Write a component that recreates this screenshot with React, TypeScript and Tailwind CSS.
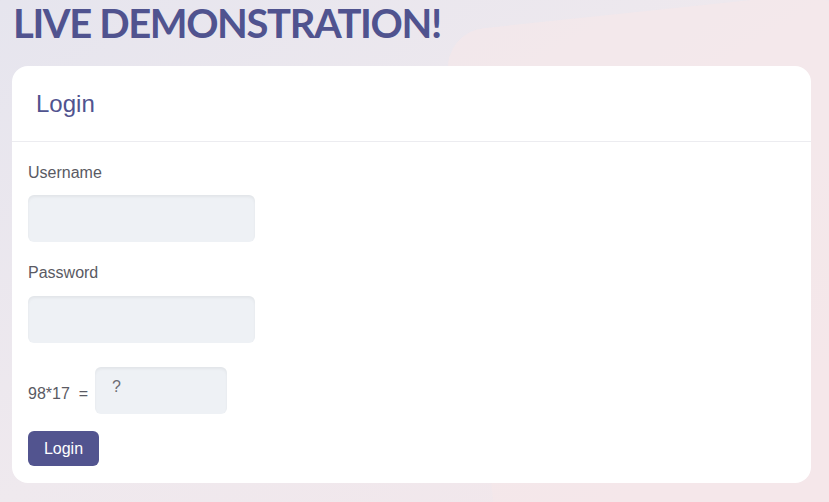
import React from "react";

export default function App() {
  return (
    <div className="w-[829px] h-[502px] overflow-hidden bg-gradient-to-br from-[#e6e5ee] via-[#efe9ee] to-[#f3e6ea] font-['Liberation_Sans',Arial,sans-serif]">
      <div className="relative h-full">
        {/* faint decorative shape */}
        <div className="absolute left-[470px] top-[10px] w-[400px] h-[520px] rounded-[40px] bg-[#f7e8ea]/60 -rotate-6" />
        <div className="relative px-3">
          <h1 className="h-[66px] pt-[1px] pl-[1px] font-['Lato',sans-serif] font-bold text-[40px] leading-[44px] text-[#50538f] tracking-[-1.4px]">
            LIVE DEMONSTRATION!
          </h1>
          <div className="w-[799px] h-[417px] bg-white rounded-2xl">
            <div className="h-[76px] border-b border-[#ececf0] pl-[24px] pt-[23px]">
              <h2 className="text-[24px] leading-[30px] text-[#50538f]">Login</h2>
            </div>
            <form className="px-4 pt-[22px] flex flex-col">
              <label className="text-[16px] leading-[18px] text-[#5a5a63]">Username</label>
              <input className="mt-[13px] w-[227px] h-[47px] rounded-md bg-[#eef1f5] shadow-[inset_0_2px_3px_rgba(0,0,0,0.05)] outline-none" />
              <label className="mt-[22px] text-[16px] leading-[18px] text-[#5a5a63]">Password</label>
              <input type="password" className="mt-[14px] w-[227px] h-[47px] rounded-md bg-[#eef1f5] shadow-[inset_0_2px_3px_rgba(0,0,0,0.05)] outline-none" />
              <div className="mt-[24px] flex items-center">
                <span className="text-[16px] text-[#5a5a63] pt-[7px]">98*17&nbsp; =</span>
                <input placeholder="?" className="ml-[7px] w-[132px] h-[47px] rounded-md bg-[#eef1f5] shadow-[inset_0_2px_3px_rgba(0,0,0,0.05)] outline-none px-[17px] pb-[8px] text-[16px] placeholder:text-[#6b6b73]" />
              </div>
              <button type="button" className="mt-[17px] w-[71px] h-[35px] rounded-md bg-[#52548f] text-white text-[16px]">
                Login
              </button>
            </form>
          </div>
        </div>
      </div>
    </div>
  );
}
